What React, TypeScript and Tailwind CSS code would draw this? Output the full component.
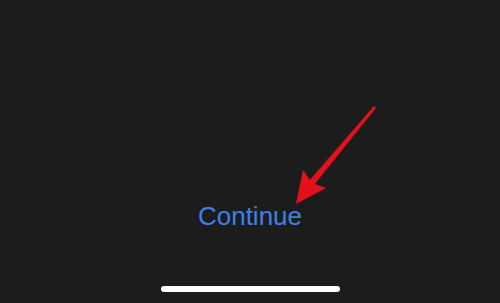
export default function App() {
  return (
    <div className="relative flex h-[303px] w-[500px] flex-col items-center justify-end bg-[#1c1c1c] pb-[11px]">
      {/* continue button */}
      <button
        className="mb-[55px] text-[26px] leading-[30px] text-[#3d80ea]"
        style={{ fontFamily: '"Liberation Sans", Arial, sans-serif' }}
      >
        Continue
      </button>

      {/* home indicator */}
      <div className="h-[6px] w-[179px] rounded-full bg-white" />

      {/* annotation arrow */}
      <svg className="absolute left-0 top-0" width="500" height="303" viewBox="0 0 500 303">
        <polygon points="374,106 376,108 314,185 309,181" fill="#e3111b" />
        <polygon points="296,204 303,170 312,183 326,188" fill="#e3111b" />
      </svg>
    </div>
  );
}
